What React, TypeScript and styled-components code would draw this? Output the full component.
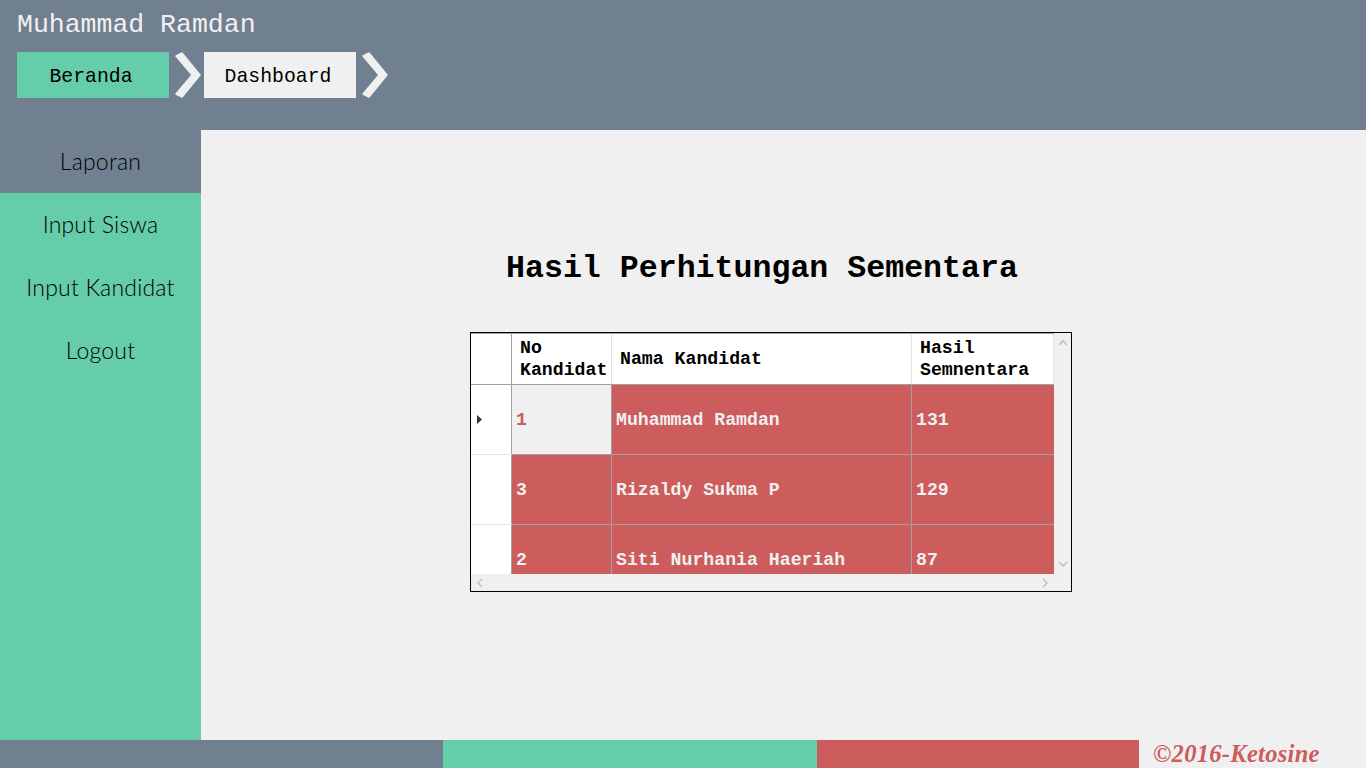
import React from "react";
import styled, { createGlobalStyle } from "styled-components";

const GlobalStyle = createGlobalStyle`
  html, body { margin: 0; padding: 0; background: #f0f0f0; }
  * { box-sizing: border-box; }
`;

const SLATE = "#708090";
const AQUA = "#66cdaa";
const RED = "#cd5c5c";
const LIGHT = "#f0f0f0";
const MONO = `"Liberation Mono", "Courier New", monospace`;

const Page = styled.div`
  width: 1366px;
  height: 768px;
  display: grid;
  grid-template-rows: 130px 1fr 28px;
  overflow: hidden;
`;

const Header = styled.header`
  background: ${SLATE};
  padding: 10px 17px 0;
  display: flex;
  flex-direction: column;
`;

const Title = styled.div`
  font-family: ${MONO};
  font-size: 26.5px;
  line-height: 30px;
  color: ${LIGHT};
  height: 30px;
`;

const Crumbs = styled.nav`
  margin-top: 12px;
  display: flex;
  align-items: center;
`;

const Crumb = styled.div<{ $bg: string }>`
  width: 152px;
  height: 46px;
  background: ${(p) => p.$bg};
  display: flex;
  align-items: center;
  justify-content: center;
  padding: 4px 4px 0 0;
  font-family: ${MONO};
  font-size: 19.8px;
  color: #000;
`;

const Body = styled.div`
  display: flex;
  min-height: 0;
`;

const Sidebar = styled.aside`
  width: 201px;
  background: ${AQUA};
  display: flex;
  flex-direction: column;
`;

const NavItem = styled.div<{ $active?: boolean }>`
  height: 63px;
  display: flex;
  align-items: center;
  justify-content: center;
  padding-bottom: 2px;
  background: ${(p) => (p.$active ? SLATE : "transparent")};
  font-family: "Lato", "Noto Sans", sans-serif;
  font-weight: 300;
  font-size: 23px;
  letter-spacing: 0.2px;
  color: #000;
`;

const Main = styled.main`
  flex: 1;
  background: ${LIGHT};
  display: flex;
  flex-direction: column;
  align-items: flex-start;
  padding: 121px 0 0 269px;
`;

const Heading = styled.h1`
  margin: 0 0 45px 36px;
  font-family: ${MONO};
  font-weight: bold;
  font-size: 31.6px;
  line-height: 36px;
  color: #000;
`;

const Frame = styled.div`
  border: 1px solid #000;
  display: grid;
  grid-template-columns: 583px 17px;
  grid-template-rows: 241px 17px;
  background: ${LIGHT};
`;

const GridArea = styled.div`
  overflow: hidden;
  border-top: 1px solid #a0a0a0;
  background: #fff;
`;

const Row = styled.div<{ $h: number; $line: string }>`
  display: grid;
  grid-template-columns: 41px 100px 300px 142px;
  height: ${(p) => p.$h}px;
  border-bottom: 1px solid ${(p) => p.$line};
`;

const HeadCell = styled.div<{ $sep?: boolean }>`
  background: #fff;
  display: flex;
  align-items: center;
  padding-left: 8px;
  font-family: ${MONO};
  font-weight: bold;
  font-size: 18.2px;
  line-height: 22px;
  color: #000;
  border-right: 1px solid ${(p) => (p.$sep ? "#a0a0a0" : "#e3e3e3")};
`;

const RowHead = styled.div`
  background: #fff;
  border-right: 1px solid #a0a0a0;
  display: flex;
  align-items: center;
  padding-left: 6px;
`;

const Cell = styled.div<{ $selected?: boolean; $last?: boolean }>`
  background: ${(p) => (p.$selected ? LIGHT : RED)};
  color: ${(p) => (p.$selected ? RED : LIGHT)};
  border-right: ${(p) => (p.$last ? "none" : "1px solid #a0a0a0")};
  display: flex;
  align-items: center;
  padding-left: 4px;
  font-family: ${MONO};
  font-weight: bold;
  font-size: 18.2px;
`;

const DataRow = styled(Row)`
  & > ${RowHead} {
    box-shadow: 0 1px 0 #e3e3e3;
  }
`;

const VScroll = styled.div`
  background: ${LIGHT};
  display: flex;
  flex-direction: column;
  justify-content: space-between;
  align-items: center;
  padding: 6px 0 6px;
`;

const HScroll = styled.div`
  background: ${LIGHT};
  display: flex;
  justify-content: space-between;
  align-items: center;
  padding: 0 5px;
`;

const Corner = styled.div`
  background: ${LIGHT};
`;

const Footer = styled.footer`
  display: flex;
`;

const Band = styled.div<{ $w: number; $bg: string }>`
  width: ${(p) => p.$w}px;
  background: ${(p) => p.$bg};
`;

const Copyright = styled.div`
  flex: 1;
  background: ${LIGHT};
  display: flex;
  align-items: center;
  padding-left: 14px;
  font-family: "Liberation Serif", "DejaVu Serif", serif;
  font-style: italic;
  font-weight: bold;
  font-size: 24.5px;
  color: ${RED};
  letter-spacing: 0.3px;
`;

const Chevron = () => (
  <svg width="35" height="46" viewBox="0 0 35 46">
    <polygon
      points="7,4 13,1 31,23 13,45 7,42 23,23"
      fill="#f0f0f0"
      stroke="#f0f0f0"
      strokeWidth="1.5"
      strokeLinejoin="round"
    />
  </svg>
);

const Arrow = ({ dir }: { dir: "up" | "down" | "left" | "right" }) => {
  const paths: Record<string, string> = {
    up: "M1 6 L5 2 L9 6",
    down: "M1 2 L5 6 L9 2",
    left: "M6 1 L2 5 L6 9",
    right: "M2 1 L6 5 L2 9",
  };
  const vertical = dir === "up" || dir === "down";
  return (
    <svg width={vertical ? 10 : 8} height={vertical ? 8 : 10} viewBox={vertical ? "0 0 10 8" : "0 0 8 10"}>
      <path d={paths[dir]} fill="none" stroke="#c2c2c2" strokeWidth="1.6" />
    </svg>
  );
};

const Indicator = () => (
  <svg width="6" height="9" viewBox="0 0 6 9">
    <polygon points="0,0 5,4.5 0,9" fill="#333" />
  </svg>
);

const rows = [
  { no: "1", nama: "Muhammad Ramdan", hasil: "131", selected: true },
  { no: "3", nama: "Rizaldy Sukma P", hasil: "129" },
  { no: "2", nama: "Siti Nurhania Haeriah", hasil: "87" },
];

export default function App() {
  return (
    <>
      <GlobalStyle />
      <Page>
        <Header>
          <Title>Muhammad Ramdan</Title>
          <Crumbs>
            <Crumb $bg={AQUA}>Beranda</Crumb>
            <Chevron />
            <Crumb $bg={LIGHT}>Dashboard</Crumb>
            <Chevron />
          </Crumbs>
        </Header>
        <Body>
          <Sidebar>
            <NavItem $active>Laporan</NavItem>
            <NavItem>Input Siswa</NavItem>
            <NavItem>Input Kandidat</NavItem>
            <NavItem>Logout</NavItem>
          </Sidebar>
          <Main>
            <Heading>Hasil Perhitungan Sementara</Heading>
            <Frame>
              <GridArea>
                <Row $h={51} $line="#a0a0a0">
                  <HeadCell $sep />
                  <HeadCell>
                    No
                    <br />
                    Kandidat
                  </HeadCell>
                  <HeadCell>Nama Kandidat</HeadCell>
                  <HeadCell>
                    Hasil
                    <br />
                    Semnentara
                  </HeadCell>
                </Row>
                {rows.map((r) => (
                  <DataRow key={r.no} $h={70} $line="#a0a0a0">
                    <RowHead>{r.selected && <Indicator />}</RowHead>
                    <Cell $selected={r.selected}>{r.no}</Cell>
                    <Cell>{r.nama}</Cell>
                    <Cell $last>{r.hasil}</Cell>
                  </DataRow>
                ))}
              </GridArea>
              <VScroll>
                <Arrow dir="up" />
                <Arrow dir="down" />
              </VScroll>
              <HScroll>
                <Arrow dir="left" />
                <Arrow dir="right" />
              </HScroll>
              <Corner />
            </Frame>
          </Main>
        </Body>
        <Footer>
          <Band $w={443} $bg={SLATE} />
          <Band $w={374} $bg={AQUA} />
          <Band $w={322} $bg={RED} />
          <Copyright>©2016-Ketosine</Copyright>
        </Footer>
      </Page>
    </>
  );
}
